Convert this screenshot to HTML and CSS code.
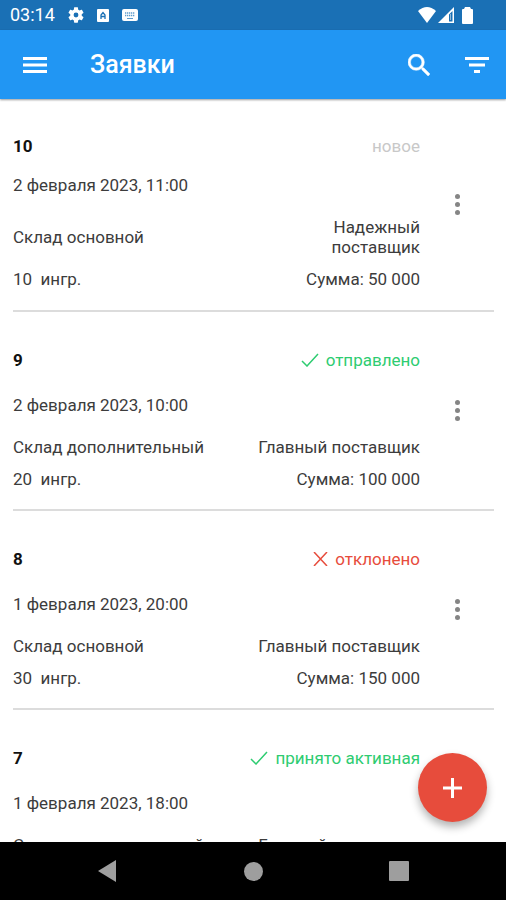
FILE: index.html
```html
<!DOCTYPE html>
<html lang="ru">
<head>
    <meta charset="UTF-8">
    <meta name="viewport" content="width=device-width, initial-scale=1">
    <title>Заявки</title>
    <link rel="stylesheet" href="styles.css">
</head>
<body>
    <div class="status-bar">
        <span class="time">03:14</span>
        <svg width="16" height="16" viewBox="2 2 20 20"><path fill="#fff" d="M19.14 12.94c.04-.3.06-.61.06-.94s-.02-.64-.07-.94l2.03-1.58c.18-.14.23-.41.12-.61l-1.92-3.32c-.12-.22-.37-.29-.59-.22l-2.39.96c-.5-.38-1.03-.7-1.62-.94l-.36-2.54c-.04-.24-.24-.41-.48-.41h-3.84c-.24 0-.43.17-.47.41l-.36 2.54c-.59.24-1.13.57-1.62.94l-2.39-.96c-.22-.08-.47 0-.59.22L2.74 8.87c-.12.21-.08.47.12.61l2.03 1.58c-.05.3-.09.63-.09.94s.02.64.07.94l-2.03 1.58c-.18.14-.23.41-.12.61l1.92 3.32c.12.22.37.29.59.22l2.39-.96c.5.38 1.03.7 1.62.94l.36 2.54c.05.24.24.41.48.41h3.84c.24 0 .44-.17.47-.41l.36-2.54c.59-.24 1.13-.56 1.62-.94l2.39.96c.22.08.47 0 .59-.22l1.92-3.32c.12-.22.07-.47-.12-.61l-2.01-1.58zM12 15a3 3 0 1 1 0-6 3 3 0 0 1 0 6z"/></svg>
        <svg width="12" height="13" viewBox="0 0 12 13"><rect width="12" height="13" rx="1" fill="#fff"/><path d="M4 10V6l2-2.500L8 6v4M4 7.500h4" fill="none" stroke="#1a70b5" stroke-width="1.300"/></svg>
        <svg width="16" height="12" viewBox="0 0 16 12"><rect width="16" height="12" rx="2" fill="#fff"/><path d="M3 4h10M3 6.500h10" stroke="#1a70b5" stroke-opacity=".7" stroke-width="1.300" stroke-dasharray="1.300 .7"/><path d="M5 9.500h6" stroke="#1a70b5" stroke-opacity=".7"/></svg>
        <span class="signals">
            <svg width="18" height="16" viewBox="0 0 18 16"><path d="M0 4Q9-4 18 4L9 16z" fill="#fff"/></svg>
            <svg width="16" height="16" viewBox="0 0 16 16"><path d="M16 0v16H0zM14.500 4L11 7.500v7h3.500z" fill="#fff" fill-rule="evenodd"/><path d="M12.500 7v6" stroke="#fff" stroke-opacity=".5"/></svg>
            <svg class="icon-battery" width="11" height="17" viewBox="0 0 11 17"><path d="M3 0h5l1 2h1q1 0 1 1v13q0 1-1 1H1q-1 0-1-1V3q0-1 1-1h1z" fill="#fff"/></svg>
        </span>
    </div>

    <header class="toolbar">
        <button class="icon-btn" aria-label="Меню">
            <svg width="24" height="16" viewBox="0 0 24 16"><path d="M0 1.500h24M0 8h24M0 14.500h24" stroke="#fff" stroke-width="3"/></svg>
        </button>
        <h1>Заявки</h1>
        <button class="icon-btn" aria-label="Поиск">
            <svg width="22" height="22" viewBox="3 3 17.500 17.500"><path fill="#fff" stroke="#fff" stroke-width=".4" d="M15.500 14h-.79l-.28-.27A6.471 6.471 0 0 0 16 9.500 6.500 6.500 0 1 0 9.500 16c1.610 0 3.090-.59 4.230-1.570l.27.28v.79l5 4.990L20.490 19l-4.990-5zm-6 0C7.010 14 5 11.990 5 9.500S7.010 5 9.500 5 14 7.010 14 9.500 11.990 14 9.500 14z"/></svg>
        </button>
        <button class="icon-btn" aria-label="Фильтр">
            <svg width="24" height="16" viewBox="0 0 24 16"><path d="M0 1.500h24M4 8h16M9 14.500h6" stroke="#fff" stroke-width="3"/></svg>
        </button>
    </header>

    <main>
        <ul class="orders">
            <li class="order order-new">
                <div class="info">
                    <div class="row head"><b>10</b><span class="status new">новое</span></div>
                    <div class="date">2 февраля 2023, 11:00</div>
                    <div class="row place"><span>Склад основной</span><span class="supplier">Надежный поставщик</span></div>
                    <div class="row"><span class="count">10  ингр.</span><span>Сумма: 50 000</span></div>
                </div>
                <button class="more" aria-label="Действия"><i></i><i></i><i></i></button>
            </li>
            <li class="order">
                <div class="info">
                    <div class="row head"><b>9</b><span class="status ok"><svg width="18" height="14" viewBox="0 0 18 14"><path d="M1 8l5 5L17 1"/></svg>отправлено</span></div>
                    <div class="date">2 февраля 2023, 10:00</div>
                    <div class="row place"><span>Склад дополнительный</span><span class="supplier">Главный поставщик</span></div>
                    <div class="row"><span class="count">20  ингр.</span><span>Сумма: 100 000</span></div>
                </div>
                <button class="more" aria-label="Действия"><i></i><i></i><i></i></button>
            </li>
            <li class="order">
                <div class="info">
                    <div class="row head"><b>8</b><span class="status rejected"><svg width="15" height="14" viewBox="0 0 15 14"><path d="M1 0l13 14M14 0L1 14"/></svg>отклонено</span></div>
                    <div class="date">1 февраля 2023, 20:00</div>
                    <div class="row place"><span>Склад основной</span><span class="supplier">Главный поставщик</span></div>
                    <div class="row"><span class="count">30  ингр.</span><span>Сумма: 150 000</span></div>
                </div>
                <button class="more" aria-label="Действия"><i></i><i></i><i></i></button>
            </li>
            <li class="order">
                <div class="info">
                    <div class="row head"><b>7</b><span class="status ok"><svg width="18" height="14" viewBox="0 0 18 14"><path d="M1 8l5 5L17 1"/></svg>принято активная</span></div>
                    <div class="date">1 февраля 2023, 18:00</div>
                    <div class="row place"><span>Склад дополнительный</span><span class="supplier">Главный поставщик</span></div>
                </div>
            </li>
        </ul>
        <button class="fab" aria-label="Добавить заявку">
            <svg width="19" height="20" viewBox="0 0 19 20"><path d="M9.500 0v20M0 10h19" stroke="#fff" stroke-width="3"/></svg>
        </button>
    </main>

    <nav class="nav-bar">
        <button aria-label="Назад"><svg width="18" height="22" viewBox="0 0 18 22"><path d="M18 0v22L0 11z" fill="#9e9e9e"/></svg></button>
        <button aria-label="Домой"><svg width="19" height="19" viewBox="0 0 19 19"><circle cx="9.500" cy="9.500" r="9.500" fill="#9e9e9e"/></svg></button>
        <button aria-label="Обзор"><svg width="20" height="20" viewBox="0 0 20 20"><rect width="20" height="20" rx="1" fill="#9e9e9e"/></svg></button>
    </nav>
</body>
</html>
```

FILE: styles.css
```css
* {
    box-sizing: border-box;
}

body {
    margin: 0;
    height: 100vh;
    display: flex;
    flex-direction: column;
    font-family: Roboto, "Noto Sans", sans-serif;
    font-size: 17px;
    line-height: 20px;
    color: #3c3c3c;
    background-color: #fff;
}

button {
    padding: 0;
    border: none;
    background: none;
    display: flex;
    align-items: center;
    justify-content: center;
    cursor: pointer;
}

svg {
    display: block;
    flex: none;
}

/* Android status bar */
.status-bar {
    flex: none;
    display: flex;
    align-items: center;
    gap: 13px;
    height: 30px;
    padding: 0 33px 0 10px;
    background-color: #1a70b5;
    color: #fff;
}

.time {
    font-size: 18px;
}

.signals {
    display: flex;
    align-items: center;
    gap: 2px;
    margin-left: auto;
}

.icon-battery {
    margin-left: 6px;
}

.toolbar {
    position: relative;
    z-index: 1;
    flex: none;
    display: flex;
    align-items: center;
    height: 69px;
    padding: 0 0 0 6px;
    background-color: #2196f3;
    box-shadow: 0 1px 2px rgba(0, 0, 0, 0.4);
}

.toolbar h1 {
    flex: 1;
    margin: 0 0 0 26px;
    font-size: 25px;
    line-height: 30px;
    font-weight: 500;
    color: #fff;
}

.icon-btn {
    width: 58px;
    height: 58px;
}

main {
    position: relative;
    flex: 1;
    min-height: 0;
    overflow: hidden;
}

.orders {
    height: 100%;
    margin: 0;
    padding: 0 12px 0 13px;
    list-style: none;
    overflow: hidden;
}

.order {
    display: grid;
    grid-template-columns: 1fr 74px;
    align-items: center;
    border-bottom: 2px solid #dcdcdc;
}

.info {
    padding: 38px 0 20px;
}

.row {
    display: flex;
    align-items: center;
    justify-content: space-between;
}

.head {
    margin-bottom: 25px;
}

.head b {
    font-weight: 700;
    color: #111;
}

.order-new .info {
    padding: 37px 0 21px;
}

.order-new .head {
    margin-bottom: 19px;
}

.place {
    margin: 22px 0 12px;
}

.supplier {
    max-width: 42%;
    text-align: right;
}

.count {
    white-space: pre;
}

.status {
    display: flex;
    align-items: center;
    gap: 7px;
}

.status svg {
    fill: none;
    stroke: currentColor;
    stroke-width: 1.5;
}

.new {
    color: #c8c8c8;
}

.ok {
    color: #2ecc71;
}

.rejected {
    color: #e74c3c;
}

/* three dots menu */
.more {
    flex-direction: column;
    gap: 3px;
    height: 48px;
}

.more i {
    width: 5px;
    height: 5px;
    border-radius: 50%;
    background-color: #858585;
}

.fab {
    position: absolute;
    right: 19px;
    bottom: 20px;
    width: 69px;
    height: 69px;
    border-radius: 50%;
    background-color: #e74c3c;
    box-shadow: 0 5px 8px rgba(0, 0, 0, 0.3);
}

/* Android navigation */
.nav-bar {
    flex: none;
    display: flex;
    justify-content: center;
    height: 58px;
    background-color: #000;
}

.nav-bar button {
    width: 146px;
}
```
